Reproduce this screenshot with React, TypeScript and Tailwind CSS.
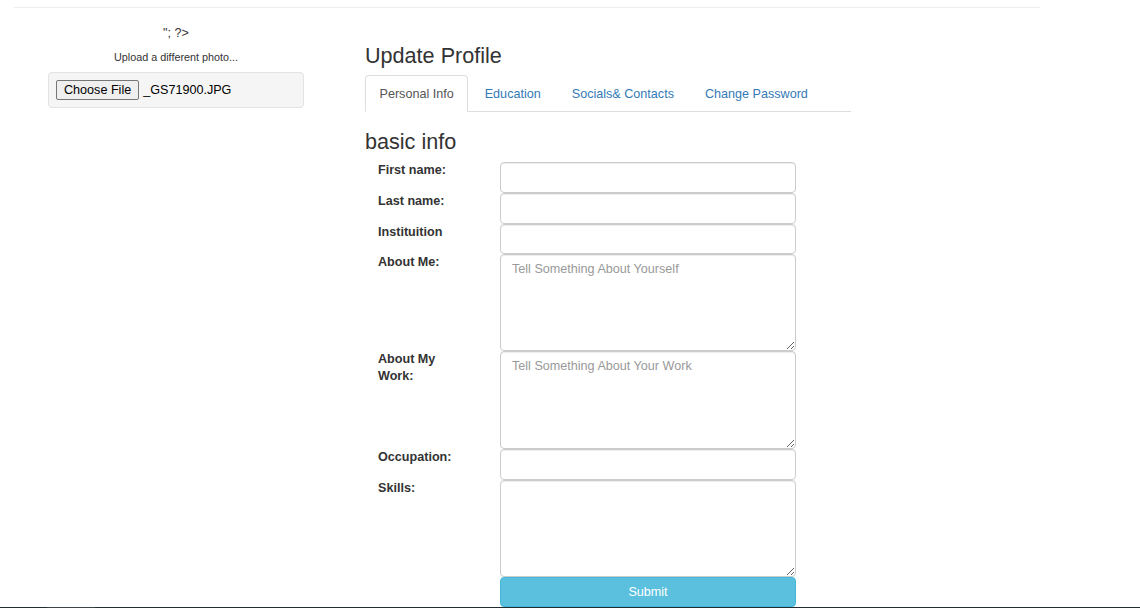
import React from "react";

const tabs = ["Personal Info", "Education", "Socials& Contacts", "Change Password"];

type Field = {
  label: string;
  kind: "input" | "textarea";
  h: string;
  placeholder?: string;
};

const fields: Field[] = [
  { label: "First name:", kind: "input", h: "h-[31px]" },
  { label: "Last name:", kind: "input", h: "h-[31px]" },
  { label: "Instituition", kind: "input", h: "h-[30px]" },
  { label: "About Me:", kind: "textarea", h: "h-[97px]", placeholder: "Tell Something About Yourself" },
  { label: "About My Work:", kind: "textarea", h: "h-[98px]", placeholder: "Tell Something About Your Work" },
  { label: "Occupation:", kind: "input", h: "h-[31px]" },
  { label: "Skills:", kind: "textarea", h: "h-[97px]" },
];

const controlCls =
  "block w-[296px] rounded-[4px] border border-[#ccc] bg-white px-[11px] text-[12.6px] leading-[18px] text-[#555] shadow-[inset_0_1px_1px_rgba(0,0,0,0.075)] outline-none placeholder:text-[#999]";

export default function App() {
  return (
    <div className="min-h-[608px] bg-white font-['Liberation_Sans',Arial,sans-serif] text-[12.6px] leading-[18px] text-[#333]">
      <div className="ml-[14px] w-[1026px] pt-[7px]">
        <div className="border-t border-[#eee]" />
      </div>

      <div className="flex">
        {/* left: photo upload */}
        <div className="ml-[48px] flex w-[256px] flex-col items-center">
          <p className="mt-[16px] text-[12.6px] leading-[18px]">&quot;; ?&gt;</p>
          <p className="mt-[9px] text-[10.8px] leading-[12px]">Upload a different photo...</p>
          <div className="mt-[9px] flex h-[36px] w-full items-center rounded-[4px] border border-[#e3e3e3] bg-[#f5f5f5] px-[7px]">
            <button
              type="button"
              className="h-[20px] rounded-[2px] border border-[#767676] bg-[#efefef] px-[7px] text-[12.6px] leading-[18px] text-black"
            >
              Choose File
            </button>
            <span className="ml-[4px] text-[12.6px] text-black">_GS71900.JPG</span>
          </div>
        </div>

        {/* right: profile form */}
        <div className="ml-[61px] w-[486px]">
          <h3 className="mt-[36px] h-[24px] text-[21.6px] leading-[24px] text-[#333]">Update Profile</h3>

          <ul className="mt-[7px] flex border-b border-[#ddd]">
            {tabs.map((t, i) => (
              <li key={t} className="mr-[2px] -mb-px">
                <a
                  href="#"
                  className={
                    i === 0
                      ? "block h-[37px] rounded-t-[4px] border border-[#ddd] border-b-white bg-white px-[13.5px] pt-[9px] text-[#555]"
                      : "block h-[37px] border border-transparent px-[13.5px] pt-[9px] text-[#337ab7]"
                  }
                >
                  {t}
                </a>
              </li>
            ))}
          </ul>

          <h3 className="mt-[18px] h-[24px] text-[21.6px] leading-[24px] text-[#333]">basic info</h3>

          <form className="mt-[8px]" onSubmit={(e) => e.preventDefault()}>
            {fields.map((f) => (
              <div key={f.label} className="flex">
                <label className="w-[135px] pl-[13px] font-bold leading-[17px]">
                  <span className="block w-[86px]">{f.label}</span>
                </label>
                {f.kind === "input" ? (
                  <input type="text" className={`${controlCls} ${f.h}`} />
                ) : (
                  <textarea placeholder={f.placeholder} className={`${controlCls} ${f.h} pt-[5px]`} />
                )}
              </div>
            ))}
            <div className="flex">
              <div className="w-[135px]" />
              <button
                type="submit"
                className="h-[30px] w-[296px] rounded-[4px] border border-[#46b8da] bg-[#5bc0de] text-[12.6px] text-white"
              >
                Submit
              </button>
            </div>
          </form>
        </div>
      </div>

      <footer className="h-[40px] bg-[#222d32]">
        <div className="ml-[47px] h-[1px] w-[48px] bg-[#3d4549]" />
      </footer>
    </div>
  );
}
